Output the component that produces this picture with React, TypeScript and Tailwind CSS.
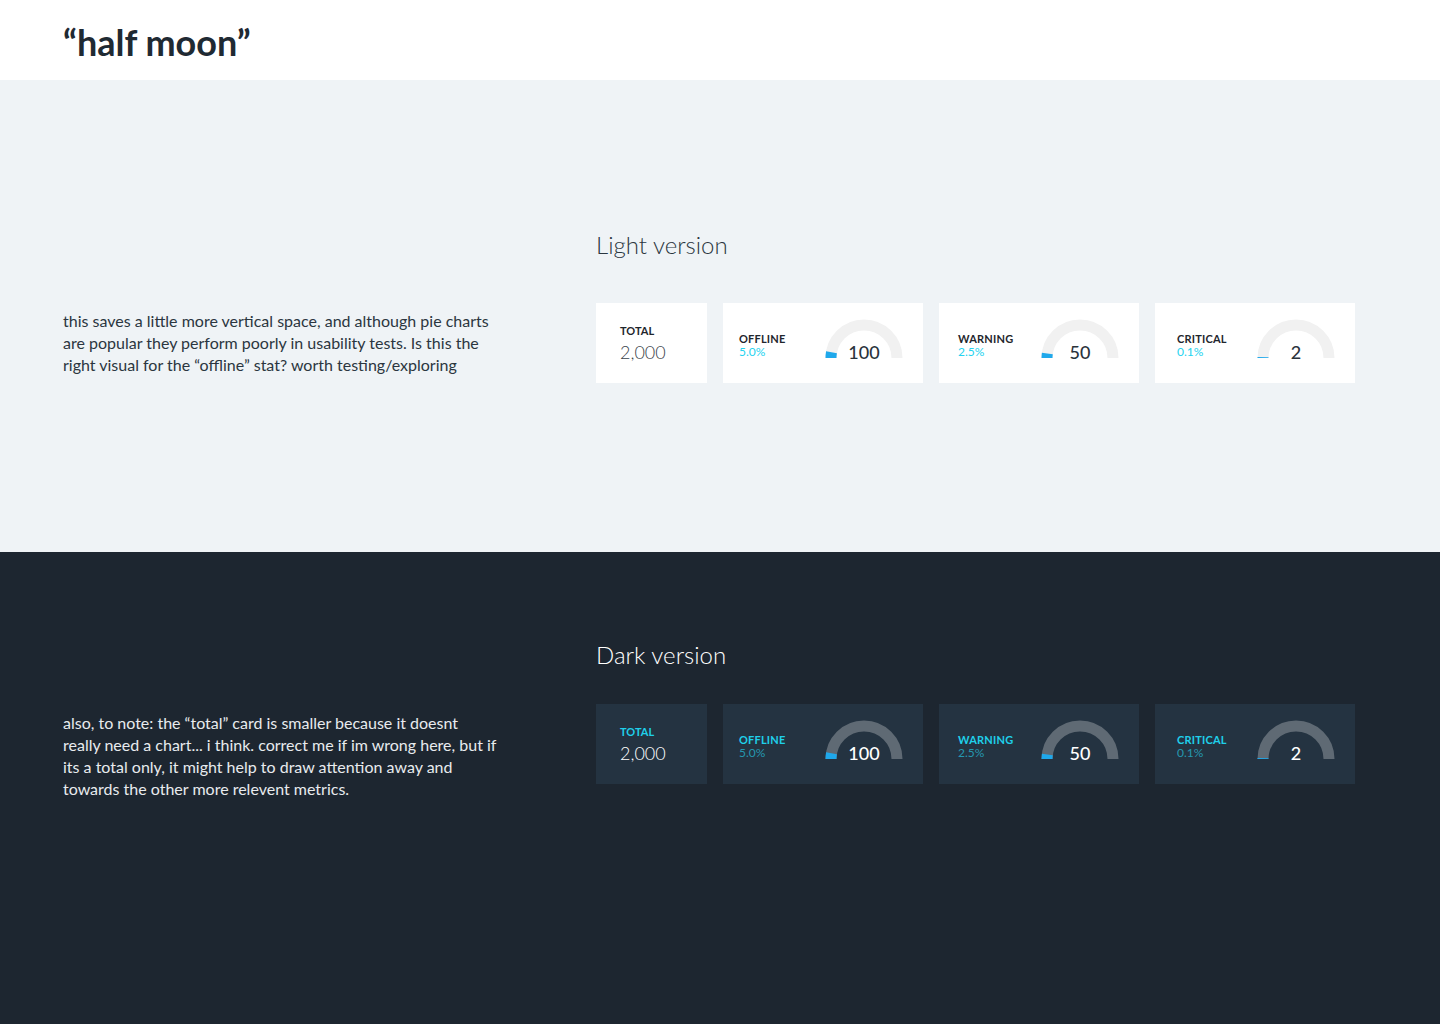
import React from "react";

type Stat = { label: string; pct: string; value: string; angle: number; pl: string };

const stats: Stat[] = [
  { label: "OFFLINE", pct: "5.0%", value: "100", angle: 10, pl: "pl-4" },
  { label: "WARNING", pct: "2.5%", value: "50", angle: 8, pl: "pl-[19px]" },
  { label: "CRITICAL", pct: "0.1%", value: "2", angle: 1.6, pl: "pl-[22px]" },
];

const Gauge = ({ angle, value, dark }: { angle: number; value: string; dark: boolean }) => {
  const cx = 39;
  const cy = 39;
  const r = 33;
  const rad = (angle * Math.PI) / 180;
  const ex = cx - r * Math.cos(rad);
  const ey = cy - r * Math.sin(rad);
  return (
    <div className="relative w-[78px] h-[42px] -mt-[6px]">
      <svg width="78" height="40" viewBox="0 0 78 40" className="block">
        <path
          d={`M ${cx - r} ${cy} A ${r} ${r} 0 0 1 ${cx + r} ${cy}`}
          fill="none"
          stroke={dark ? "#5f6a74" : "#f1f1f1"}
          strokeWidth="11"
        />
        <path
          d={`M ${cx - r} ${cy} A ${r} ${r} 0 0 1 ${ex.toFixed(2)} ${ey.toFixed(2)}`}
          fill="none"
          stroke="#1fa8eb"
          strokeWidth="11"
        />
      </svg>
      <span
        className={`absolute left-0 right-0 bottom-0 text-center text-[18px] leading-[18px] font-medium ${
          dark ? "text-white" : "text-[#2a333c]"
        }`}
      >
        {value}
      </span>
    </div>
  );
};

const Cards = ({ dark }: { dark: boolean }) => {
  const card = dark ? "bg-[#243341]" : "bg-white";
  return (
    <div className="flex gap-4">
      <div className={`${card} w-[111px] h-20 pl-6 flex flex-col justify-center gap-[3px]`}>
        <div className={`text-[11px] leading-[14px] font-bold ${dark ? "text-[#1fd0ea]" : "text-[#1f262d]"}`}>TOTAL</div>
        <div className={`text-[18px] leading-[22px] font-light ${dark ? "text-white" : "text-[#3a434b]"}`}>2,000</div>
      </div>
      {stats.map((s) => (
        <div key={s.label} className={`${card} w-[200px] h-20 ${s.pl} pr-5 flex items-center justify-between`}>
          <div className="flex flex-col pt-1">
            <div className={`text-[11px] leading-[13px] font-bold tracking-[0.2px] ${dark ? "text-[#1fd0ea]" : "text-[#1f262d]"}`}>
              {s.label}
            </div>
            <div className={`text-[12px] leading-[14px] ${dark ? "text-[#2598b0]" : "text-[#25d3ef]"}`}>{s.pct}</div>
          </div>
          <Gauge angle={s.angle} value={s.value} dark={dark} />
        </div>
      ))}
    </div>
  );
};

export default function App() {
  return (
    <div className="w-[1440px] h-[1024px] font-['Lato','Liberation_Sans',sans-serif]">
      <header className="h-20 bg-white px-[63px] flex items-center">
        <h1 className="text-[36px] leading-[40px] font-bold text-[#1f2a33] pt-1">“half moon”</h1>
      </header>

      <section className="h-[472px] bg-[#eff3f6] px-[63px] pt-[147px]">
        <div className="grid grid-cols-[533px_1fr]">
          <div />
          <h2 className="text-[24px] leading-[36px] font-light text-[#2b3640] mb-10">Light version</h2>
          <p className="text-[16px] leading-[22px] text-[#2b3640] w-[460px] mt-[7px]">
            this saves a little more vertical space, and although pie charts
            <br />
            are popular they perform poorly in usability tests. Is this the
            <br />
            right visual for the “offline” stat? worth testing/exploring
          </p>
          <Cards dark={false} />
        </div>
      </section>

      <section className="h-[472px] bg-[#1d2630] px-[63px] pt-[85px]">
        <div className="grid grid-cols-[533px_1fr]">
          <div />
          <h2 className="text-[24px] leading-[36px] font-light text-white mb-[31px]">Dark version</h2>
          <p className="text-[16px] leading-[22px] text-[#e8ebee] w-[460px] mt-2">
            also, to note: the “total” card is smaller because it doesnt
            <br />
            really need a chart... i think. correct me if im wrong here, but if
            <br />
            its a total only, it might help to draw attention away and
            <br />
            towards the other more relevent metrics.
          </p>
          <Cards dark={true} />
        </div>
      </section>
    </div>
  );
}
